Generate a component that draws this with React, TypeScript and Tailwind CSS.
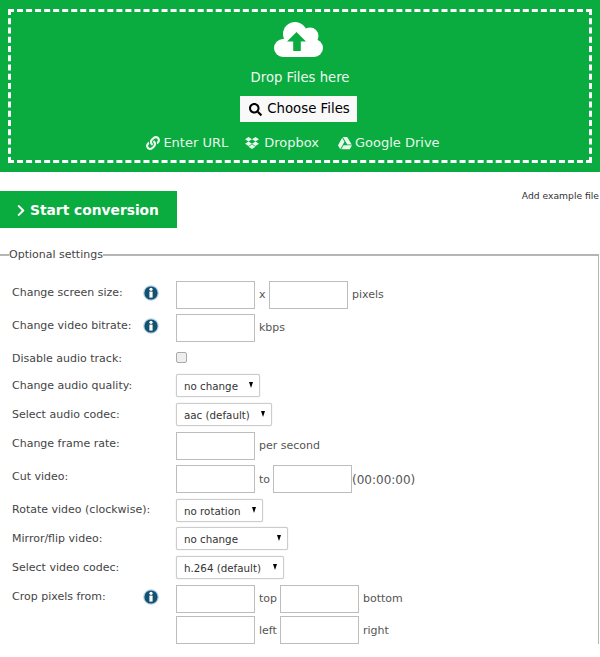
import type { ReactNode } from 'react';
import { FaDropbox, FaGoogleDrive, FaLink, FaSearch, FaChevronRight } from 'react-icons/fa';

const inputCls = 'w-[79px] h-[28px] border border-[#bdbdbd] bg-white shrink-0';

function CloudIcon() {
  return (
    <svg width="49" height="35" viewBox="0 0 49 35" className="mt-[10px] mr-[4px] shrink-0">
      <g fill="#fff">
        <circle cx="9" cy="26" r="9" />
        <circle cx="40" cy="26" r="9" />
        <circle cx="21" cy="12" r="12" />
        <circle cx="36" cy="14" r="8.5" />
        <rect x="9" y="17" width="31" height="18" />
      </g>
      <path d="M22.5 10L32 19.5H26.8V29H19.2V19.5H13z" fill="#0aab3f" />
    </svg>
  );
}

function InfoIcon() {
  return (
    <svg width="16" height="16" viewBox="0 0 16 16" className="shrink-0">
      <circle cx="8" cy="8" r="7.8" fill="#b5d3e2" />
      <circle cx="8" cy="8" r="6.6" fill="#14506f" />
      <circle cx="8" cy="4.3" r="1.6" fill="#fff" />
      <path d="M6.4 6.6h3.2v6h-3.2z" fill="#fff" />
    </svg>
  );
}

function Row({ label, info, className, children }: { label: string; info?: boolean; className: string; children: ReactNode }) {
  return (
    <div className={`flex items-start ${className}`}>
      <div className="w-[164px] shrink-0 flex justify-between pr-[17px] pt-[4px] text-[11px] leading-[16px] text-[#444] whitespace-nowrap">
        <span>{label}</span>
        {info && <InfoIcon />}
      </div>
      {children}
    </div>
  );
}

function Select({ value, width }: { value: string; width: string }) {
  return (
    <div className={`relative h-[23px] ${width} border border-[#ccc] rounded-[2px] bg-white shadow-[0_0_1px_#bbb] pl-[7px] text-[10.3px] leading-[23px] text-[#333]`}>
      {value}
      <span className="absolute right-[6px] top-[7px] w-0 h-0 border-x-[2.5px] border-x-transparent border-t-[6px] border-t-black" />
    </div>
  );
}

function Unit({ children, className }: { children: ReactNode; className: string }) {
  return <span className={`text-[11px] leading-[16px] text-[#555] ${className}`}>{children}</span>;
}

export default function App() {
  return (
    <div className="w-[600px] h-[657px] overflow-hidden bg-white font-['DejaVu_Sans',sans-serif]">
      <div className="h-[172px] bg-[#0aab3f] pt-[9px] px-[8px]">
        <div className="h-[154px] border-[3px] border-dashed border-white flex flex-col items-center text-white">
          <CloudIcon />
          <div className="mt-[13px] text-[13.2px] leading-[16px] text-[#eefaf1]">Drop Files here</div>
          <div className="mt-[10px] mr-[3px] h-[26px] w-[117px] pl-[2px] bg-[#f9f9f9] text-black flex items-center justify-center gap-[5px] text-[13.3px]">
            <FaSearch className="w-[13px] h-[13px]" />
            Choose Files
          </div>
          <div className="mt-[13px] flex text-[13px] leading-[16px] text-[#e8f8ec] mr-[14px]">
            <span className="flex items-center gap-[3px]"><FaLink className="w-[14px] h-[14px]" />Enter URL</span>
            <span className="flex items-center gap-[5px] ml-[17px]"><FaDropbox className="w-[14px] h-[14px]" />Dropbox</span>
            <span className="flex items-center gap-[3px] ml-[19px]"><FaGoogleDrive className="w-[14px] h-[14px]" />Google Drive</span>
          </div>
        </div>
      </div>

      <div className="flex justify-between items-start mt-[19px]">
        <div className="h-[37px] w-[177px] bg-[#0aab3f] text-white font-bold text-[13.8px] flex items-center pl-[16px] pt-[1px] gap-[4px]">
          <FaChevronRight className="w-[10px] h-[13px]" />
          Start conversion
        </div>
        <div className="text-[9.2px] leading-[12px] mt-[-1px] pr-[1px] text-[#333]">Add example file</div>
      </div>

      <fieldset className="mt-[19px] mr-[1px] border-t-[2px] border-r border-[#b5b5b5] pl-[12px] min-w-0">
        <legend className="ml-[-3px] text-[11px] leading-[16px] text-[#444]">Optional settings</legend>
        <div className="mt-[18px] flex flex-col gap-[5px]">
          <Row label="Change screen size:" info className="h-[28px]">
            <div className={inputCls} />
            <Unit className="ml-[4px] mt-[6px] w-[10px]">x</Unit>
            <div className={inputCls} />
            <Unit className="ml-[4px] mt-[6px]">pixels</Unit>
          </Row>
          <Row label="Change video bitrate:" info className="h-[28px]">
            <div className={inputCls} />
            <Unit className="ml-[4px] mt-[6px]">kbps</Unit>
          </Row>
          <Row label="Disable audio track:" className="h-[22px]">
            <div className="mt-[5px] w-[11px] h-[11px] border border-[#aaa] rounded-[2px] bg-[#eee]" />
          </Row>
          <Row label="Change audio quality:" className="h-[24px]"><Select value="no change" width="w-[84px]" /></Row>
          <Row label="Select audio codec:" className="h-[24px]"><Select value="aac (default)" width="w-[96px]" /></Row>
          <Row label="Change frame rate:" className="h-[28px]">
            <div className={inputCls} />
            <Unit className="ml-[4px] mt-[6px]">per second</Unit>
          </Row>
          <Row label="Cut video:" className="h-[28px]">
            <div className={inputCls} />
            <Unit className="ml-[4px] mt-[7px] w-[14px]">to</Unit>
            <div className={inputCls} />
            <Unit className="mt-[7px] text-[12px]!">(00:00:00)</Unit>
          </Row>
          <Row label="Rotate video (clockwise):" className="h-[24px]"><Select value="no rotation" width="w-[87px] mt-[1px]" /></Row>
          <Row label="Mirror/flip video:" className="h-[24px]"><Select value="no change" width="w-[112px]" /></Row>
          <Row label="Select video codec:" className="h-[24px]"><Select value="h.264 (default)" width="w-[108px]" /></Row>
          <Row label="Crop pixels from:" info className="h-[59px]">
            <div className="grid grid-cols-[79px_25px_79px_auto] gap-y-[3px]">
              <div className={inputCls} />
              <Unit className="ml-[4px] mt-[6px]">top</Unit>
              <div className={inputCls} />
              <Unit className="ml-[4px] mt-[6px]">bottom</Unit>
              <div className={inputCls} />
              <Unit className="ml-[4px] mt-[7px]">left</Unit>
              <div className={inputCls} />
              <Unit className="ml-[4px] mt-[7px]">right</Unit>
            </div>
          </Row>
        </div>
      </fieldset>
    </div>
  );
}
